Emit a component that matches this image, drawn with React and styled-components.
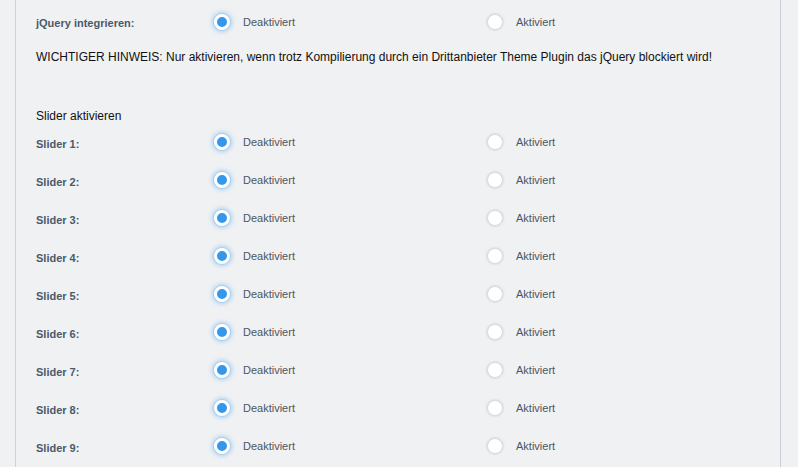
import styled, { createGlobalStyle } from "styled-components";

const GlobalStyle = createGlobalStyle`
  body {
    margin: 0;
    background: #f0f1f3;
    font-family: "Liberation Sans", Arial, sans-serif;
  }
`

const Panel = styled.div`
  margin-left: 15px;
  width: 766px;
  min-height: 467px;
  border-left: 1px solid #cfd3d8;
  border-right: 1px solid #c9ced6;
  padding: 3px 0 0 20px;
  box-sizing: border-box;
`
const Row = styled.div`
  display: flex;
  align-items: center;
  height: 38px;
`
const Label = styled.div`
  width: 178px;
  font-size: 11px;
  font-weight: bold;
  color: #4b5a69;
  padding-top: ${(p) => (p.$low ? "3px" : "1px")};
`
const Option = styled.label`
  width: 273px;
  display: flex;
  align-items: center;
  gap: 13px;
  font-size: 11px;
  color: #4a5663;
`
const Radio = styled.span`
  width: 16px;
  height: 16px;
  border-radius: 50%;
  box-sizing: border-box;
  flex-shrink: 0;
  background: ${(p) => (p.$checked ? "#3597ea" : "#ffffff")};
  border: ${(p) => (p.$checked ? "3px solid #ffffff" : "1px solid #d9dcdf")};
  box-shadow: ${(p) =>
    p.$checked
      ? "0 0 0 1px #a6d2f5, 0 0 4px 2px rgba(110, 180, 240, 0.55)"
      : "0 0 2px 1px rgba(0, 0, 0, 0.08)"};
`
const Notice = styled.p`
  margin: 9px 0 0;
  font-size: 12px;
  line-height: 14px;
  color: #111;
`
const Section = styled.p`
  margin: 45px 0 0;
  font-size: 12px;
  line-height: 14px;
  color: #111;
`

function ToggleRow({ label, low }) {
  return (
    <Row>
      <Label $low={low}>{label}</Label>
      <Option>
        <Radio $checked />
        Deaktiviert
      </Option>
      <Option>
        <Radio />
        Aktiviert
      </Option>
    </Row>
  )
}

export default function App() {
  const sliders = [1, 2, 3, 4, 5, 6, 7, 8, 9];

  return (
    <>
      <GlobalStyle />
      <Panel>
        <ToggleRow label="jQuery integrieren:" />
        <Notice>
          WICHTIGER HINWEIS: Nur aktivieren, wenn trotz Kompilierung durch ein Drittanbieter Theme Plugin das jQuery blockiert wird!
        </Notice>
        <Section>Slider aktivieren</Section>
        {sliders.map((n) => (
          <ToggleRow key={n} label={`Slider ${n}:`} low />
        ))}
      </Panel>
    </>
  )
}
